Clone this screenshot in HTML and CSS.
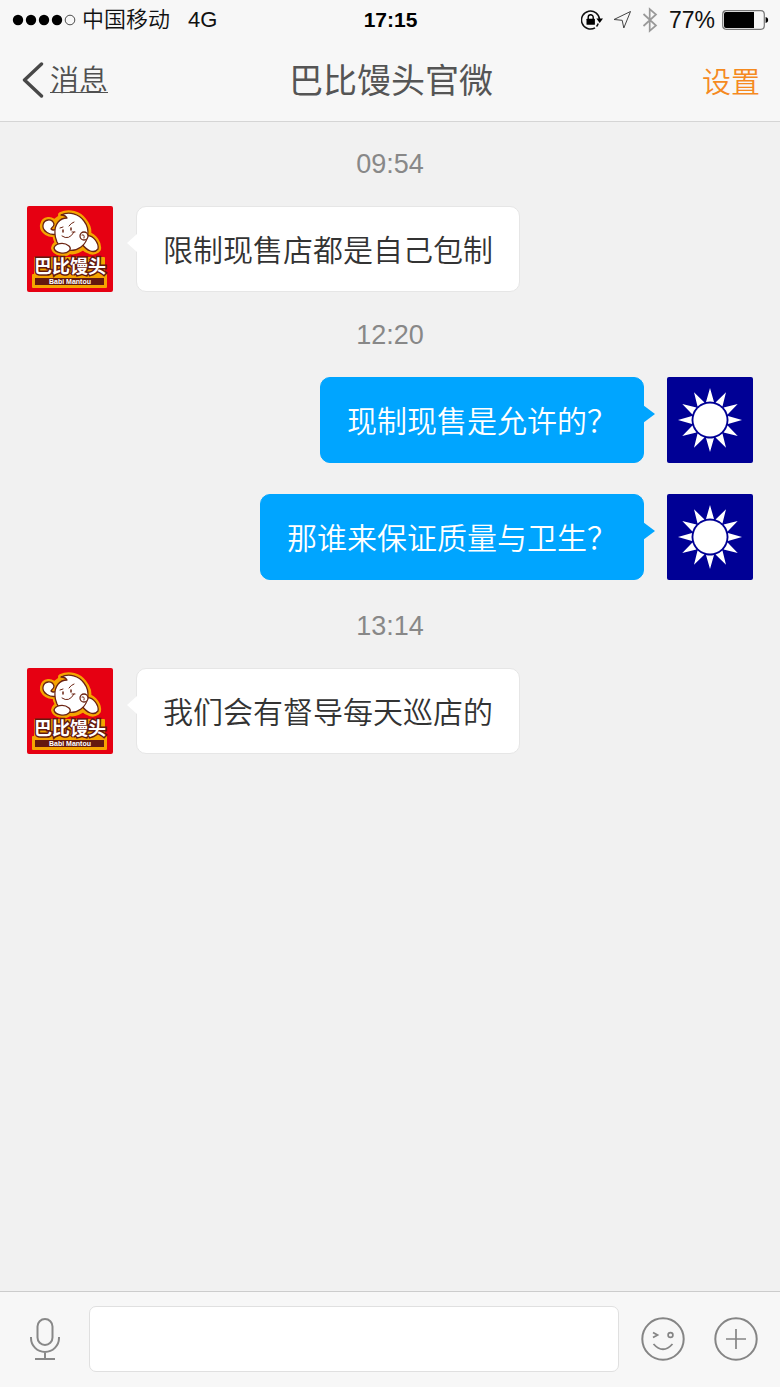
FILE: index.html
```html
<!DOCTYPE html>
<html lang="zh-CN">
<head>
<meta charset="utf-8">
<meta name="viewport" content="width=device-width, initial-scale=1">
<title>巴比馒头官微</title>
<link rel="stylesheet" href="styles.css">
</head>
<body>
<div class="status-bar">
  <div class="status-left">
    <svg width="65" height="14" viewBox="0 0 65 14" role="img" aria-label="信号">
      <circle cx="6" cy="7" r="5.2"/><circle cx="19" cy="7" r="5.2"/><circle cx="32" cy="7" r="5.2"/><circle cx="45" cy="7" r="5.2"/>
      <circle cx="58" cy="7" r="4.8" fill="none" stroke="#222" stroke-width=".8"/>
    </svg>
    <span class="carrier">中国移动</span>
    <span>4G</span>
  </div>
  <time class="clock">17:15</time>
  <div class="status-right">
    <svg class="lock" width="22" height="20" viewBox="0 0 22 20" aria-hidden="true">
      <path d="M14 17.8A9 9 0 1 1 18.5 9.5M17.2 13.5A9 9 0 0 1 15.5 16.5" fill="none" stroke="#111" stroke-width="1.5"/>
      <path d="M15.4 8.5H22L18.7 13Z"/>
      <rect x="5.5" y="8.8" width="8.4" height="6" rx=".5"/>
      <path d="M7.2 9V7.2a2.5 2.5 0 0 1 5 0V9" fill="none" stroke="#000" stroke-width="1.4"/>
    </svg>
    <svg class="arrow" width="19" height="20" viewBox="0 0 19 20" aria-hidden="true"><path d="M17.5 1.5L1 9.5L9.2 10.3L10.8 18Z" fill="none" stroke="#444" stroke-width="1"/></svg>
    <svg class="bluetooth" width="16" height="26" viewBox="0 0 16 26" aria-hidden="true"><path d="M1.5 7L14 18.5L7.7 24V2L14 7.5L1.5 19" fill="none" stroke="#999" stroke-width="1.7"/></svg>
    <span class="percent">77%</span>
    <svg width="47" height="20" viewBox="0 0 47 20" aria-hidden="true">
      <rect x=".7" y=".7" width="41.6" height="18.6" rx="3.5" fill="none" stroke="#777" stroke-width="1.2"/>
      <path d="M4 2H32V18H4a2 2 0 0 1-2-2V4a2 2 0 0 1 2-2Z"/>
      <path d="M43.6 7C47 7.6 47 12.4 43.6 13Z"/>
    </svg>
  </div>
</div>

<header class="nav">
  <a class="back" href="#">
    <svg width="22" height="36" viewBox="0 0 22 36" aria-hidden="true"><path d="M19.5 2L2.5 18L19.5 34" fill="none" stroke="#484848" stroke-width="3.4" stroke-linecap="round" stroke-linejoin="round"/></svg>
    <span class="back-label">消息</span>
  </a>
  <h1 class="title">巴比馒头官微</h1>
  <button class="settings" type="button">设置</button>
</header>

<main class="chat">
  <time class="stamp">09:54</time>
  <div class="message incoming">
    <svg class="avatar" viewBox="0 0 86 86" role="img" aria-label="巴比馒头">
      <g id="babi">
        <rect width="86" height="86" fill="#e60012"/>
        <path d="M29 27 C23 30 15 25 16 19 C17 13 25 12 27 18 C30 13 35 11 38 11 C37 10 36 9 34 9 C42 5 52 8 57 15 C61 20 62 25 61 29 C67 30 72 38 71 43 C67 48 60 45 56 41 C51 45 46 46 42 45 C39 49 28 47 27 42 C27 40 30 37 32 37 C29 34 28 31 29 27Z" fill="#f5a400" stroke="#f5a400" stroke-width="6" stroke-linejoin="round"/>
        <path d="M8 52 H77 V69 H79 V81 H6 V69 H8Z" fill="#f5a400" stroke="#f5a400" stroke-width="2" stroke-linejoin="round"/>
        <g fill="#fff" stroke="#6b2412" stroke-width="1.3" stroke-linejoin="round" stroke-linecap="round">
          <path d="M30 28 C23 30 15 25 16 19 C17 13 25 12 27 18 C27 21 24 22 24 23 C26 25 28 24 30 23"/>
          <path d="M58 30 C67 28 72 38 71 43 C67 48 60 45 55 38"/>
          <path d="M28 28 C27 18 33 12 40 12 C39 10 37 9 34 9 C42 5 52 8 57 15 C64 24 61 36 54 41 C46 47 34 45 30 36 C29 33 28 31 28 28Z"/>
          <path d="M42 40 C36 35 28 38 27 42 C28 47 38 49 42 45 C44 43 43 41 42 40Z"/>
          <circle cx="57" cy="30" r="4"/>
          <g fill="none" stroke-width="1">
            <path d="M35 30 Q42 35 47 26M45 26H48M33 22L36 21M42 20Q44 17 47 16M55 29Q58 28 57 32"/>
            <path d="M36 24V26M44 22V24" stroke-width="1.5"/>
          </g>
        </g>
        <path d="M8 72 H77 V79 H8Z" fill="#64190f"/>
        <text class="logo-name" x="43" y="67" text-anchor="middle">巴比馒头</text>
        <text class="logo-latin" x="43" y="78" text-anchor="middle">Babi Mantou</text>
      </g>
    </svg>
    <p class="bubble">限制现售店都是自己包制</p>
  </div>
  <time class="stamp">12:20</time>
  <div class="message outgoing">
    <p class="bubble">现制现售是允许的？</p>
    <svg class="avatar" viewBox="0 0 86 86" role="img" aria-label="我">
      <g id="sun">
        <rect width="86" height="86" fill="#000095"/>
        <g fill="#fff">
          <circle cx="43" cy="43" r="16.6"/>
          <g id="rays">
            <path id="ray" d="M43 11 L47 25 Q43 24 39 25Z"/>
            <use href="#ray" transform="rotate(30 43 43)"/>
            <use href="#ray" transform="rotate(60 43 43)"/>
          </g>
          <use href="#rays" transform="rotate(90 43 43)"/>
          <use href="#rays" transform="rotate(180 43 43)"/>
          <use href="#rays" transform="rotate(270 43 43)"/>
        </g>
      </g>
    </svg>
  </div>
  <div class="message outgoing">
    <p class="bubble">那谁来保证质量与卫生？</p>
    <svg class="avatar" viewBox="0 0 86 86" role="img" aria-label="我"><use href="#sun"/></svg>
  </div>
  <time class="stamp">13:14</time>
  <div class="message incoming">
    <svg class="avatar" viewBox="0 0 86 86" role="img" aria-label="巴比馒头"><use href="#babi"/></svg>
    <p class="bubble">我们会有督导每天巡店的</p>
  </div>
</main>

<form class="composer">
  <button class="tool" type="button" aria-label="语音">
    <svg width="32" height="44" viewBox="0 0 32 44"><g fill="none" stroke="#888" stroke-width="2"><rect x="8.5" y="2" width="15" height="26" rx="7.5"/><path d="M2 20v1a14 14 0 0 0 28 0v-1M16 35v7M6 42H26"/></g></svg>
  </button>
  <input class="entry" type="text" aria-label="消息内容">
  <button class="tool" type="button" aria-label="表情">
    <svg width="44" height="44" viewBox="0 0 44 44"><g fill="none" stroke="#858585" stroke-width="2"><circle cx="22" cy="22" r="20.7"/><path d="M12.5 27Q22 37.5 31.5 27M12 15.5L16.5 18L12 20.5" stroke-width="1.8"/><circle cx="29.5" cy="18" r="2.4" stroke-width="1.7"/></g></svg>
  </button>
  <button class="tool" type="button" aria-label="更多">
    <svg width="44" height="44" viewBox="0 0 44 44"><g fill="none" stroke="#858585" stroke-width="2"><circle cx="22" cy="22" r="20.7"/><path d="M12 22H32M22 12V32" stroke-width="1.7"/></g></svg>
  </button>
</form>
</body>
</html>
```
FILE: styles.css
```css
* {
  box-sizing: border-box;
}

body {
  margin: 0;
  min-height: 100vh;
  display: flex;
  flex-direction: column;
  background: #f1f1f1;
  color: #333;
  font-family: "Liberation Sans", "Noto Sans CJK SC", sans-serif;
}

button {
  padding: 0;
  border: 0;
  background: none;
  font: inherit;
  cursor: pointer;
}

svg {
  display: block;
  flex: none;
}

.status-bar {
  display: grid;
  grid-template-columns: 1fr auto 1fr;
  align-items: center;
  height: 40px;
  padding: 0 11px 0 12px;
  background: #f7f7f7;
  color: #111;
  font-size: 22px;
  line-height: 40px;
}

.status-left,
.status-right {
  display: flex;
  align-items: center;
}

.status-right {
  justify-content: flex-end;
}

.carrier {
  margin: 0 18px 0 5px;
  font-weight: 350;
}

.clock {
  color: #000;
  font-size: 21px;
  font-weight: 700;
}

.arrow {
  margin-left: 10px;
}

.bluetooth {
  margin: 0 11px 0 10px;
}

.percent {
  margin-right: 7px;
  font-size: 23px;
}

.nav {
  display: grid;
  grid-template-columns: 1fr auto 1fr;
  align-items: center;
  height: 82px;
  padding: 0 20px 2px 22px;
  border-bottom: 1px solid #d5d5d5;
  background: #f7f7f7;
}

.back {
  display: flex;
  align-items: center;
  gap: 6px;
  color: #505050;
  font-size: 29px;
  font-weight: 350;
  line-height: 44px;
  text-decoration: none;
}

.back-label {
  padding-top: 2px;
  text-decoration: underline;
  text-decoration-thickness: 1px;
  text-underline-offset: 1px;
}

.title {
  margin: 0;
  padding-top: 2px;
  color: #555;
  font-size: 34px;
  font-weight: 400;
  line-height: 48px;
}

.settings {
  justify-self: end;
  color: #f58a1f;
  font-size: 29px;
  font-weight: 350;
}

.chat {
  flex: 1;
  display: flex;
  flex-direction: column;
  gap: 28px;
  padding: 27px;
}

.stamp {
  padding-top: 2px;
  color: #888;
  font-size: 27px;
  line-height: 27px;
  text-align: center;
}

.message {
  display: flex;
  align-items: flex-start;
  gap: 23px;
}

.outgoing {
  justify-content: flex-end;
  margin-bottom: 3px;
}

.avatar {
  width: 86px;
  height: 86px;
  border-radius: 2px;
}

.bubble {
  position: relative;
  margin: 0;
  padding: 22px 26px 18px;
  border: 1px solid #e6e6e6;
  border-radius: 10px;
  background: #fff;
  font-size: 30px;
  font-weight: 350;
  line-height: 44px;
}

.bubble::before {
  content: "";
  position: absolute;
  top: 27px;
  left: -10px;
  width: 10px;
  height: 18px;
  background: #fff;
  clip-path: polygon(0 50%, 100% 0, 100% 100%);
}

.outgoing .bubble {
  border-color: #00a5ff;
  background: #00a5ff;
  color: #fff;
}

.outgoing .bubble::before {
  left: auto;
  right: -12px;
  width: 12px;
  background: #00a5ff;
  clip-path: polygon(0 0, 100% 50%, 0 100%);
}

.logo-name {
  fill: #fff;
  stroke: #64190f;
  stroke-width: 3px;
  paint-order: stroke;
  font-family: "Noto Sans CJK SC", sans-serif;
  font-size: 18px;
  font-weight: 700;
}

.logo-latin {
  fill: #fff;
  font-size: 7px;
  font-weight: 700;
}

.composer {
  display: flex;
  align-items: center;
  height: 96px;
  padding: 0 22px 2px 29px;
  border-top: 1px solid #ccc;
  background: #f7f7f7;
}

.entry {
  flex: 1;
  min-width: 0;
  height: 66px;
  margin: 0 22px 0 28px;
  padding: 0 16px;
  border: 1px solid #e0e0e0;
  border-radius: 7px;
  background: #fff;
  font: inherit;
  font-size: 30px;
}

.tool + .tool {
  margin-left: 29px;
}
```
